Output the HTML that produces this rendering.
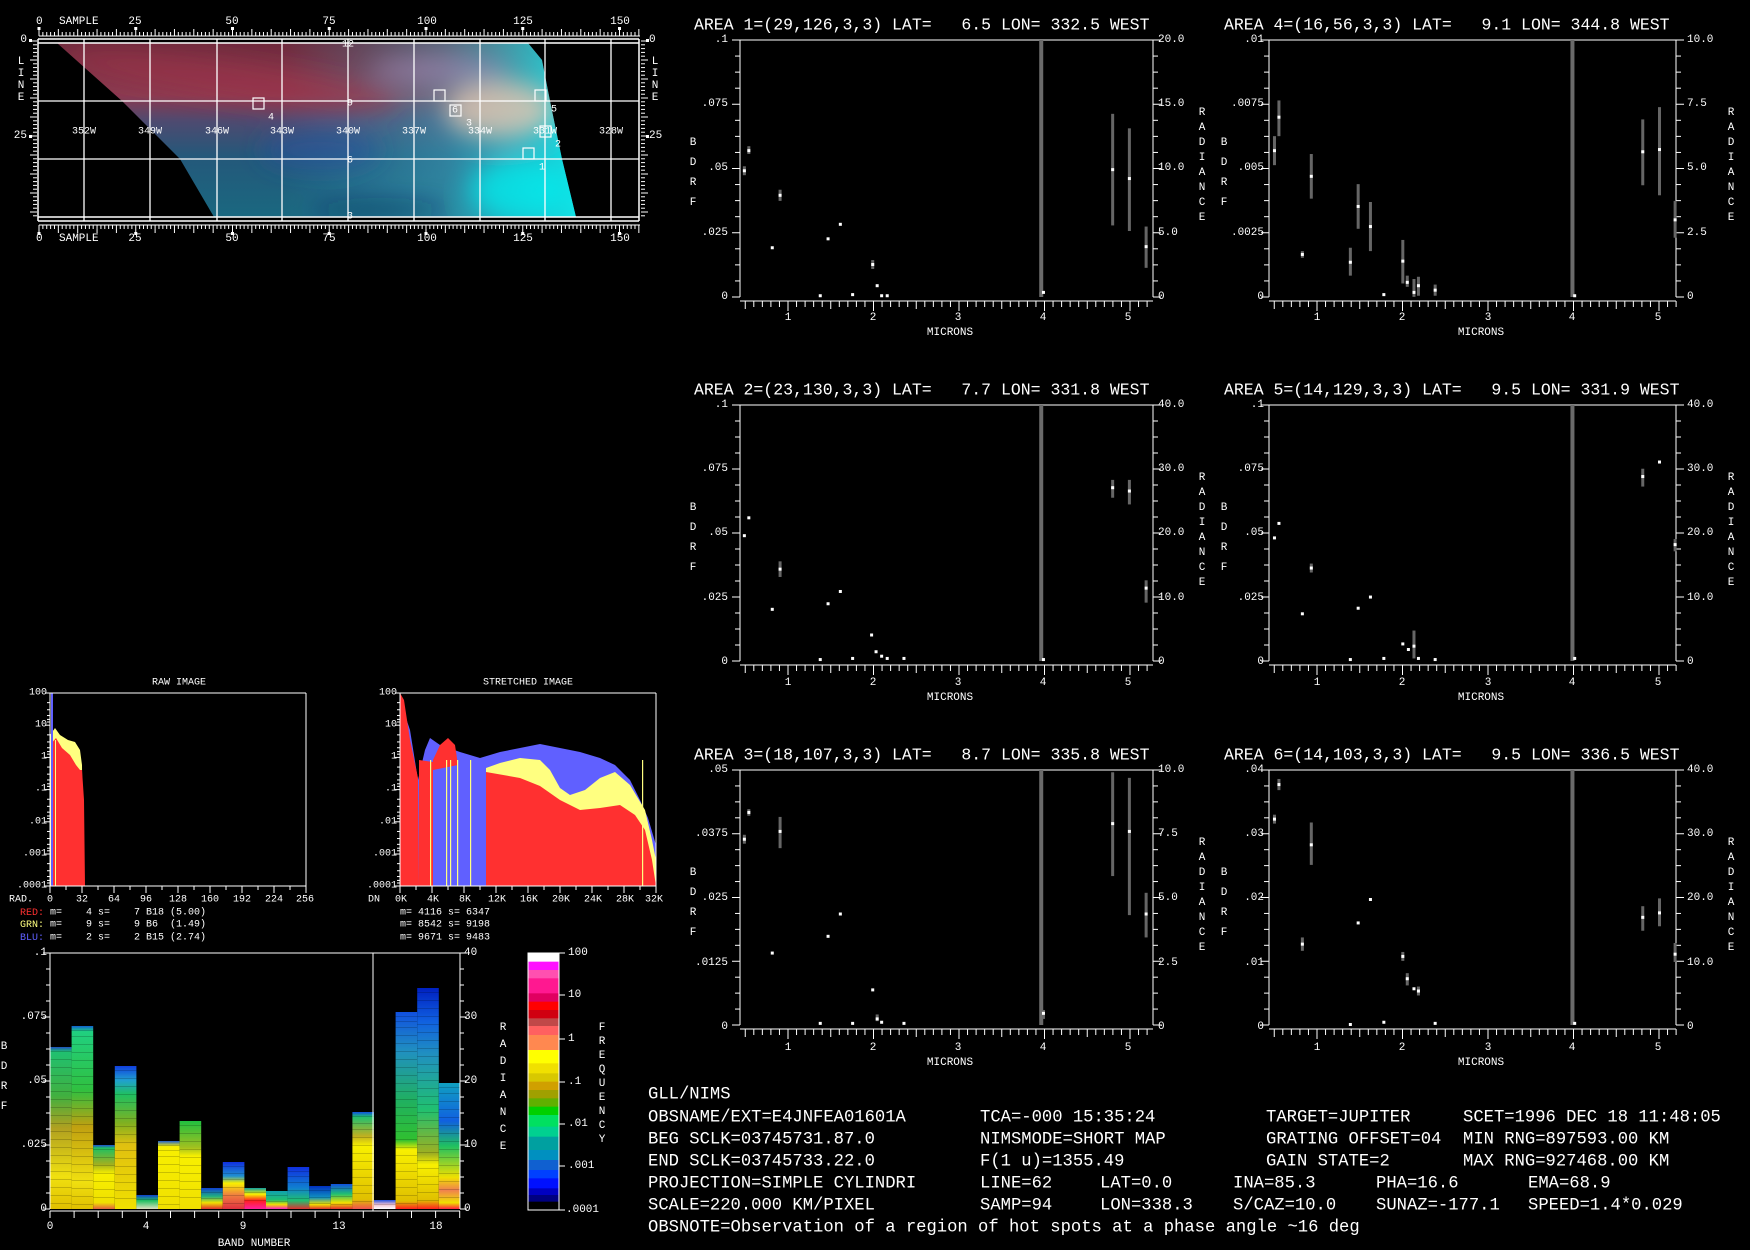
<!DOCTYPE html>
<html><head><meta charset="utf-8"><style>
html,body{margin:0;padding:0;background:#000;width:1750px;height:1250px;overflow:hidden}
svg{display:block}
text{font-family:"Liberation Mono",monospace;fill:#fff;dominant-baseline:central;white-space:pre}
.s{font-size:11px}.t{font-size:16.5px}.b{font-size:17.2px}.h{font-size:10px}
.e{text-anchor:end}.m{text-anchor:middle}
</style></head><body>
<svg id="s" width="1750" height="1250" xmlns="http://www.w3.org/2000/svg" xml:space="preserve">
<defs>
<linearGradient id="mv" x1="0" y1="43" x2="0" y2="217" gradientUnits="userSpaceOnUse">
<stop offset="0" stop-color="#6e2a3c"/><stop offset=".3" stop-color="#8a3a50"/><stop offset=".45" stop-color="#4e4a70"/><stop offset=".65" stop-color="#24587a"/><stop offset="1" stop-color="#1a6880"/></linearGradient>
<linearGradient id="mh" x1="280" y1="0" x2="576" y2="0" gradientUnits="userSpaceOnUse">
<stop offset="0" stop-color="#30a0c0" stop-opacity="0"/><stop offset=".55" stop-color="#40b0c8" stop-opacity=".45"/><stop offset="1" stop-color="#10f0f0" stop-opacity=".9"/></linearGradient>
<clipPath id="mc"><polygon points="57,43 528,43 542,60 550,101 562,159 576,217 214,217 180,159 122,101"/></clipPath>
<filter id="bl"><feGaussianBlur stdDeviation="12"/></filter>
</defs>
<g clip-path="url(#mc)">
<rect x="40" y="40" width="600" height="180" fill="url(#mv)"/>
<rect x="40" y="40" width="600" height="180" fill="url(#mh)"/>
<g filter="url(#bl)">
<ellipse cx="230" cy="80" rx="170" ry="18" fill="#a03048" opacity=".6" transform="rotate(8 230 80)"/>
<ellipse cx="500" cy="110" rx="55" ry="28" fill="#f0c8b0" opacity=".75"/>
<ellipse cx="440" cy="70" rx="70" ry="14" fill="#b090c0" opacity=".5"/>
<ellipse cx="320" cy="150" rx="60" ry="20" fill="#2a50a0" opacity=".5"/>
<ellipse cx="520" cy="190" rx="50" ry="30" fill="#00f0f0" opacity=".7"/>
<ellipse cx="380" cy="210" rx="70" ry="6" fill="#102050" opacity=".7"/>
</g>
</g>
<g id="g"></g>

<text class="s" x="36" y="22">0</text><text class="s" x="59" y="22">SAMPLE</text>
<text class="s m" x="135" y="22">25</text><text class="s m" x="232" y="22">50</text><text class="s m" x="329" y="22">75</text><text class="s m" x="427" y="22">100</text><text class="s m" x="523" y="22">125</text><text class="s m" x="620" y="22">150</text>
<text class="s" x="36" y="239">0</text><text class="s" x="59" y="239">SAMPLE</text>
<text class="s m" x="135" y="239">25</text><text class="s m" x="232" y="239">50</text><text class="s m" x="329" y="239">75</text><text class="s m" x="427" y="239">100</text><text class="s m" x="523" y="239">125</text><text class="s m" x="620" y="239">150</text>
<text class="s e" x="27" y="40">0</text><text class="s e" x="27" y="136">25</text>
<text class="s m" x="21" y="62">L</text><text class="s m" x="21" y="74">I</text><text class="s m" x="21" y="86">N</text><text class="s m" x="21" y="98">E</text>
<text class="s" x="649" y="40">0</text><text class="s" x="649" y="136">25</text>
<text class="s m" x="655" y="62">L</text><text class="s m" x="655" y="74">I</text><text class="s m" x="655" y="86">N</text><text class="s m" x="655" y="98">E</text>
<text class="h m" x="84" y="132">352W</text><text class="h m" x="150" y="132">349W</text><text class="h m" x="217" y="132">346W</text><text class="h m" x="282" y="132">343W</text><text class="h m" x="348" y="132">340W</text><text class="h m" x="414" y="132">337W</text><text class="h m" x="480" y="132">334W</text><text class="h m" x="545" y="132">331W</text><text class="h m" x="611" y="132">328W</text>
<text class="h m" x="348" y="45">12</text><text class="h m" x="350" y="104">9</text><text class="h m" x="350" y="161">6</text><text class="h m" x="350" y="217">3</text>
<text class="h" x="268" y="118">4</text><text class="h" x="452" y="111">6</text><text class="h" x="466" y="124">3</text><text class="h" x="551" y="110">5</text><text class="h" x="555" y="145">2</text><text class="h" x="539" y="168">1</text>

<text class="t" x="694" y="25">AREA 1=(29,126,3,3) LAT=   6.5 LON= 332.5 WEST</text>
<text class="t" x="1224" y="25">AREA 4=(16,56,3,3) LAT=   9.1 LON= 344.8 WEST</text>
<text class="t" x="694" y="390">AREA 2=(23,130,3,3) LAT=   7.7 LON= 331.8 WEST</text>
<text class="t" x="1224" y="390">AREA 5=(14,129,3,3) LAT=   9.5 LON= 331.9 WEST</text>
<text class="t" x="694" y="755">AREA 3=(18,107,3,3) LAT=   8.7 LON= 335.8 WEST</text>
<text class="t" x="1224" y="755">AREA 6=(14,103,3,3) LAT=   9.5 LON= 336.5 WEST</text>

<g>
<text class="s e" x="728" y="40">.1</text><text class="s e" x="728" y="104">.075</text><text class="s e" x="728" y="168">.05</text><text class="s e" x="728" y="233">.025</text><text class="s e" x="728" y="297">0</text>
<text class="s" x="1158" y="40">20.0</text><text class="s" x="1158" y="104">15.0</text><text class="s" x="1158" y="168">10.0</text><text class="s" x="1158" y="233">5.0</text><text class="s" x="1158" y="297">0</text>
<text class="s e" x="1264" y="40">.01</text><text class="s e" x="1264" y="104">.0075</text><text class="s e" x="1264" y="168">.005</text><text class="s e" x="1264" y="233">.0025</text><text class="s e" x="1264" y="297">0</text>
<text class="s" x="1687" y="40">10.0</text><text class="s" x="1687" y="104">7.5</text><text class="s" x="1687" y="168">5.0</text><text class="s" x="1687" y="233">2.5</text><text class="s" x="1687" y="297">0</text>
</g>
<g transform="translate(0,365)">
<text class="s e" x="728" y="40">.1</text><text class="s e" x="728" y="104">.075</text><text class="s e" x="728" y="168">.05</text><text class="s e" x="728" y="233">.025</text><text class="s e" x="728" y="297">0</text>
<text class="s" x="1158" y="40">40.0</text><text class="s" x="1158" y="104">30.0</text><text class="s" x="1158" y="168">20.0</text><text class="s" x="1158" y="233">10.0</text><text class="s" x="1158" y="297">0</text>
<text class="s e" x="1264" y="40">.1</text><text class="s e" x="1264" y="104">.075</text><text class="s e" x="1264" y="168">.05</text><text class="s e" x="1264" y="233">.025</text><text class="s e" x="1264" y="297">0</text>
<text class="s" x="1687" y="40">40.0</text><text class="s" x="1687" y="104">30.0</text><text class="s" x="1687" y="168">20.0</text><text class="s" x="1687" y="233">10.0</text><text class="s" x="1687" y="297">0</text>
</g>
<g transform="translate(0,730)">
<text class="s e" x="728" y="40">.05</text><text class="s e" x="728" y="104">.0375</text><text class="s e" x="728" y="168">.025</text><text class="s e" x="728" y="233">.0125</text><text class="s e" x="728" y="297">0</text>
<text class="s" x="1158" y="40">10.0</text><text class="s" x="1158" y="104">7.5</text><text class="s" x="1158" y="168">5.0</text><text class="s" x="1158" y="233">2.5</text><text class="s" x="1158" y="297">0</text>
<text class="s e" x="1264" y="40">.04</text><text class="s e" x="1264" y="104">.03</text><text class="s e" x="1264" y="168">.02</text><text class="s e" x="1264" y="233">.01</text><text class="s e" x="1264" y="297">0</text>
<text class="s" x="1687" y="40">40.0</text><text class="s" x="1687" y="104">30.0</text><text class="s" x="1687" y="168">20.0</text><text class="s" x="1687" y="233">10.0</text><text class="s" x="1687" y="297">0</text>
</g>
<g>
<text class="s m" x="788" y="318">1</text><text class="s m" x="873" y="318">2</text><text class="s m" x="958" y="318">3</text><text class="s m" x="1043" y="318">4</text><text class="s m" x="1128" y="318">5</text>
<text class="s m" x="950" y="333">MICRONS</text>
<text class="s m" x="1317" y="318">1</text><text class="s m" x="1402" y="318">2</text><text class="s m" x="1488" y="318">3</text><text class="s m" x="1572" y="318">4</text><text class="s m" x="1658" y="318">5</text>
<text class="s m" x="1481" y="333">MICRONS</text>
<text class="s m" x="693" y="143">B</text><text class="s m" x="693" y="163">D</text><text class="s m" x="693" y="183">R</text><text class="s m" x="693" y="203">F</text>
<text class="s m" x="1224" y="143">B</text><text class="s m" x="1224" y="163">D</text><text class="s m" x="1224" y="183">R</text><text class="s m" x="1224" y="203">F</text>
<text class="s m" x="1202" y="113">R</text><text class="s m" x="1202" y="128">A</text><text class="s m" x="1202" y="143">D</text><text class="s m" x="1202" y="158">I</text><text class="s m" x="1202" y="173">A</text><text class="s m" x="1202" y="188">N</text><text class="s m" x="1202" y="203">C</text><text class="s m" x="1202" y="218">E</text>
<text class="s m" x="1731" y="113">R</text><text class="s m" x="1731" y="128">A</text><text class="s m" x="1731" y="143">D</text><text class="s m" x="1731" y="158">I</text><text class="s m" x="1731" y="173">A</text><text class="s m" x="1731" y="188">N</text><text class="s m" x="1731" y="203">C</text><text class="s m" x="1731" y="218">E</text>
</g>
<g transform="translate(0,365)">
<text class="s m" x="788" y="318">1</text><text class="s m" x="873" y="318">2</text><text class="s m" x="958" y="318">3</text><text class="s m" x="1043" y="318">4</text><text class="s m" x="1128" y="318">5</text>
<text class="s m" x="950" y="333">MICRONS</text>
<text class="s m" x="1317" y="318">1</text><text class="s m" x="1402" y="318">2</text><text class="s m" x="1488" y="318">3</text><text class="s m" x="1572" y="318">4</text><text class="s m" x="1658" y="318">5</text>
<text class="s m" x="1481" y="333">MICRONS</text>
<text class="s m" x="693" y="143">B</text><text class="s m" x="693" y="163">D</text><text class="s m" x="693" y="183">R</text><text class="s m" x="693" y="203">F</text>
<text class="s m" x="1224" y="143">B</text><text class="s m" x="1224" y="163">D</text><text class="s m" x="1224" y="183">R</text><text class="s m" x="1224" y="203">F</text>
<text class="s m" x="1202" y="113">R</text><text class="s m" x="1202" y="128">A</text><text class="s m" x="1202" y="143">D</text><text class="s m" x="1202" y="158">I</text><text class="s m" x="1202" y="173">A</text><text class="s m" x="1202" y="188">N</text><text class="s m" x="1202" y="203">C</text><text class="s m" x="1202" y="218">E</text>
<text class="s m" x="1731" y="113">R</text><text class="s m" x="1731" y="128">A</text><text class="s m" x="1731" y="143">D</text><text class="s m" x="1731" y="158">I</text><text class="s m" x="1731" y="173">A</text><text class="s m" x="1731" y="188">N</text><text class="s m" x="1731" y="203">C</text><text class="s m" x="1731" y="218">E</text>
</g>
<g transform="translate(0,730)">
<text class="s m" x="788" y="318">1</text><text class="s m" x="873" y="318">2</text><text class="s m" x="958" y="318">3</text><text class="s m" x="1043" y="318">4</text><text class="s m" x="1128" y="318">5</text>
<text class="s m" x="950" y="333">MICRONS</text>
<text class="s m" x="1317" y="318">1</text><text class="s m" x="1402" y="318">2</text><text class="s m" x="1488" y="318">3</text><text class="s m" x="1572" y="318">4</text><text class="s m" x="1658" y="318">5</text>
<text class="s m" x="1481" y="333">MICRONS</text>
<text class="s m" x="693" y="143">B</text><text class="s m" x="693" y="163">D</text><text class="s m" x="693" y="183">R</text><text class="s m" x="693" y="203">F</text>
<text class="s m" x="1224" y="143">B</text><text class="s m" x="1224" y="163">D</text><text class="s m" x="1224" y="183">R</text><text class="s m" x="1224" y="203">F</text>
<text class="s m" x="1202" y="113">R</text><text class="s m" x="1202" y="128">A</text><text class="s m" x="1202" y="143">D</text><text class="s m" x="1202" y="158">I</text><text class="s m" x="1202" y="173">A</text><text class="s m" x="1202" y="188">N</text><text class="s m" x="1202" y="203">C</text><text class="s m" x="1202" y="218">E</text>
<text class="s m" x="1731" y="113">R</text><text class="s m" x="1731" y="128">A</text><text class="s m" x="1731" y="143">D</text><text class="s m" x="1731" y="158">I</text><text class="s m" x="1731" y="173">A</text><text class="s m" x="1731" y="188">N</text><text class="s m" x="1731" y="203">C</text><text class="s m" x="1731" y="218">E</text>
</g>

<text class="h m" x="179" y="683">RAW IMAGE</text>
<text class="h m" x="528" y="683">STRETCHED IMAGE</text>
<text class="h e" x="47" y="693">100</text><text class="h e" x="47" y="725">10</text><text class="h e" x="47" y="757">1</text><text class="h e" x="47" y="789">.1</text><text class="h e" x="47" y="822">.01</text><text class="h e" x="47" y="854">.001</text><text class="h e" x="47" y="886">.0001</text>
<text class="h e" x="397" y="693">100</text><text class="h e" x="397" y="725">10</text><text class="h e" x="397" y="757">1</text><text class="h e" x="397" y="789">.1</text><text class="h e" x="397" y="822">.01</text><text class="h e" x="397" y="854">.001</text><text class="h e" x="397" y="886">.0001</text>
<text class="h" x="9" y="900">RAD.</text>
<text class="h m" x="50" y="900">0</text><text class="h m" x="82" y="900">32</text><text class="h m" x="114" y="900">64</text><text class="h m" x="146" y="900">96</text><text class="h m" x="178" y="900">128</text><text class="h m" x="210" y="900">160</text><text class="h m" x="242" y="900">192</text><text class="h m" x="274" y="900">224</text><text class="h m" x="305" y="900">256</text>
<text class="h" x="368" y="900">DN</text>
<text class="h m" x="401" y="900">0K</text><text class="h m" x="433" y="900">4K</text><text class="h m" x="465" y="900">8K</text><text class="h m" x="497" y="900">12K</text><text class="h m" x="529" y="900">16K</text><text class="h m" x="561" y="900">20K</text><text class="h m" x="593" y="900">24K</text><text class="h m" x="625" y="900">28K</text><text class="h m" x="654" y="900">32K</text>
<text class="h" x="20" y="913"><tspan style="fill:#ff3030">RED:</tspan> m=    4 s=    7 B18 (5.00)</text>
<text class="h" x="20" y="925"><tspan style="fill:#ffff80">GRN:</tspan> m=    9 s=    9 B6  (1.49)</text>
<text class="h" x="20" y="938"><tspan style="fill:#6060ff">BLU:</tspan> m=    2 s=    2 B15 (2.74)</text>
<text class="h" x="400" y="913">m= 4116 s= 6347</text>
<text class="h" x="400" y="925">m= 8542 s= 9198</text>
<text class="h" x="400" y="938">m= 9671 s= 9483</text>

<text class="s e" x="47" y="953">.1</text><text class="s e" x="47" y="1017">.075</text><text class="s e" x="47" y="1081">.05</text><text class="s e" x="47" y="1145">.025</text><text class="s e" x="47" y="1209">0</text>
<text class="s" x="464" y="953">40</text><text class="s" x="464" y="1017">30</text><text class="s" x="464" y="1081">20</text><text class="s" x="464" y="1145">10</text><text class="s" x="464" y="1209">0</text>
<text class="s m" x="4" y="1047">B</text><text class="s m" x="4" y="1067">D</text><text class="s m" x="4" y="1087">R</text><text class="s m" x="4" y="1107">F</text>
<text class="s m" x="503" y="1028">R</text><text class="s m" x="503" y="1045">A</text><text class="s m" x="503" y="1062">D</text><text class="s m" x="503" y="1079">I</text><text class="s m" x="503" y="1096">A</text><text class="s m" x="503" y="1113">N</text><text class="s m" x="503" y="1130">C</text><text class="s m" x="503" y="1147">E</text>
<text class="s m" x="50" y="1227">0</text><text class="s m" x="146" y="1227">4</text><text class="s m" x="243" y="1227">9</text><text class="s m" x="339" y="1227">13</text><text class="s m" x="436" y="1227">18</text>
<text class="s m" x="254" y="1244">BAND NUMBER</text>
<text class="s" x="568" y="953">100</text><text class="s" x="568" y="995">10</text><text class="s" x="568" y="1039">1</text><text class="s" x="568" y="1082">.1</text><text class="s" x="568" y="1124">.01</text><text class="s" x="568" y="1166">.001</text><text class="s" x="566" y="1210">.0001</text>
<text class="s m" x="602" y="1028">F</text><text class="s m" x="602" y="1042">R</text><text class="s m" x="602" y="1056">E</text><text class="s m" x="602" y="1070">Q</text><text class="s m" x="602" y="1084">U</text><text class="s m" x="602" y="1098">E</text><text class="s m" x="602" y="1112">N</text><text class="s m" x="602" y="1126">C</text><text class="s m" x="602" y="1140">Y</text>

<text class="b" x="648" y="1095">GLL/NIMS</text>
<text class="b" x="648" y="1118">OBSNAME/EXT=E4JNFEA01601A</text><text class="b" x="980" y="1118">TCA=-000 15:35:24</text><text class="b" x="1266" y="1118">TARGET=JUPITER</text><text class="b" x="1463" y="1118">SCET=1996 DEC 18 11:48:05</text>
<text class="b" x="648" y="1140">BEG SCLK=03745731.87.0</text><text class="b" x="980" y="1140">NIMSMODE=SHORT MAP</text><text class="b" x="1266" y="1140">GRATING OFFSET=04</text><text class="b" x="1463" y="1140">MIN RNG=897593.00 KM</text>
<text class="b" x="648" y="1162">END SCLK=03745733.22.0</text><text class="b" x="980" y="1162">F(1 u)=1355.49</text><text class="b" x="1266" y="1162">GAIN STATE=2</text><text class="b" x="1463" y="1162">MAX RNG=927468.00 KM</text>
<text class="b" x="648" y="1184">PROJECTION=SIMPLE CYLINDRI</text><text class="b" x="980" y="1184">LINE=62</text><text class="b" x="1100" y="1184">LAT=0.0</text><text class="b" x="1233" y="1184">INA=85.3</text><text class="b" x="1376" y="1184">PHA=16.6</text><text class="b" x="1528" y="1184">EMA=68.9</text>
<text class="b" x="648" y="1206">SCALE=220.000 KM/PIXEL</text><text class="b" x="980" y="1206">SAMP=94</text><text class="b" x="1100" y="1206">LON=338.3</text><text class="b" x="1233" y="1206">S/CAZ=10.0</text><text class="b" x="1376" y="1206">SUNAZ=-177.1</text><text class="b" x="1528" y="1206">SPEED=1.4*0.029</text>
<text class="b" x="648" y="1228">OBSNOTE=Observation of a region of hot spots at a phase angle ~16 deg</text>
</svg>
<script>
var NS='http://www.w3.org/2000/svg',G=document.getElementById('g');
function el(t,a){var e=document.createElementNS(NS,t);for(var k in a)e.setAttribute(k,a[k]);G.appendChild(e);return e;}
function L(x1,y1,x2,y2,c,w){el('line',{x1:x1,y1:y1,x2:x2,y2:y2,stroke:c||'#fff','stroke-width':w||1});}
function R(x,y,w,h,c){el('rect',{x:x,y:y,width:w,height:h,fill:c});}
function P(pts,c){el('polygon',{points:pts,fill:c});}
L(38,39,639,39,'#fff',1.5);L(38,43,639,43,'#fff',1.5);L(38,217,639,217,'#fff',1.5);L(38,221,639,221,'#fff',1.5);
L(38,39,38,221,'#fff',1.5);L(639,39,639,221,'#fff',1.5);
[84,150,217,282,348,414,480,545,611].forEach(function(x){L(x,39,x,221,'#fff',1.3);});
L(38,101,639,101,'#fff',1.3);L(38,159,639,159,'#fff',1.3);
for(var s=0;s<=155;s++){var x=39+s*3.87;if(x>640)break;var lg=s%5==0;L(x,lg?29:32,x,36);L(x,225,x,lg?233:229);}
L(39,36,640,36);L(39,225,640,225);
[0,25,50,75,100,125,150].forEach(function(s){var x=39+s*3.87;R(x-1.5,27,3,3,'#fff');R(x-1.5,232,3,3,'#fff');});
for(var l=0;l<=46;l++){var y=41+l*3.8;if(y>220)break;var lg=l%5==0;L(lg?30:33,y,37,y);L(641,y,lg?648:645,y);}
R(29,39,3,3,'#fff');R(29,135,3,3,'#fff');R(646,39,3,3,'#fff');R(646,135,3,3,'#fff');
[[253,98],[434,90],[450,105],[535,90],[540,126],[523,148]].forEach(function(b){el('rect',{x:b[0],y:b[1],width:11,height:11,fill:'none',stroke:'#fff','stroke-width':1.2});});
var S=1.116;
function plot(bx1,bx2,by1,by2,m1,pts,bigx){
 L(bx1,by1,bx2,by1);L(bx1,by1,bx1,by2);L(bx2,by1,bx2,by2);
 for(var i=0;i<=16;i++){var y=by1+i*(by2-by1)/16,lg=i%4==0;L(bx1-(lg?8:5),y,bx1,y);L(bx2,y,bx2+(lg?8:5),y);}
 var ya=by2+4;L(bx1,ya,bx2,ya);
 for(var m=0.5;m<=5.21;m+=0.1){var x=m1+(m-1)*85.5;if(x<bx1-1||x>bx2+1)continue;var r=Math.round(m*10);L(x,ya,x,ya+(r%10==0?10:(r%5==0?8:6)));}
 var bx=bigx*S;R(bx-2,by1,4,by2-by1,'#6a6a6a');
 pts.forEach(function(p){var x=p[0]*S,y=p[1]*S;if(p.length>2)R(x-1.5,p[2]*S,3,(p[3]-p[2])*S,'#666');R(x-1.5,y-1.5,3,3,'#fff');});
}
plot(740,1153,40,297,788,[[667,153,149,157],[671,135,131,138],[692,222],[699,175,170,180],[735,265],[742,214],[753,201],[764,264],[782,237,233,241],[786,256],[790,265],[795,265],[935,262],[997,152,102,202],[1012,160,115,207],[1027,221,203,240]],933);
plot(740,1153,405,661,788,[[667,480],[671,464],[692,546],[699,510,503,517],[735,591],[742,541],[753,530],[764,590],[781,569],[785,584],[790,588],[795,590],[810,590],[935,591],[997,437,430,446],[1012,440,430,452],[1027,527,520,540]],933);
plot(740,1153,770,1025,788,[[667,752,748,756],[671,728,725,731],[692,854],[699,745,732,760],[735,917],[742,839],[753,819],[764,917],[782,887],[786,913,909,915],[790,916],[810,917],[935,908,905,913],[997,738,692,785],[1012,745,697,820],[1027,819,800,840]],933);
plot(1269,1676,40,297,1317,[[1142,135,122,148],[1146,105,90,122],[1167,228,225,231],[1175,158,138,178],[1210,235,222,247],[1217,185,165,205],[1228,203,181,225],[1240,264],[1257,234,215,254],[1261,253,247,257],[1267,262,250,266],[1271,256,248,265],[1286,260,255,265],[1411,265],[1472,136,107,166],[1487,134,96,175],[1501,197,180,213]],1409);
plot(1269,1676,405,661,1317,[[1142,482],[1146,469],[1167,550],[1175,509,505,513],[1210,591],[1217,545],[1228,535],[1240,590],[1257,577],[1262,582],[1267,579,565,590],[1271,590],[1286,591],[1411,590],[1472,427,420,436],[1487,414],[1501,488,483,494]],1409);
plot(1269,1676,770,1025,1317,[[1142,734,730,738],[1146,703,698,708],[1167,846,840,852],[1175,757,737,775],[1210,918],[1217,827],[1228,806],[1240,916],[1257,857,853,861],[1261,877,872,883],[1267,886],[1271,888,884,892],[1286,917],[1411,917],[1472,822,812,834],[1487,818,805,830],[1501,855,845,862]],1409);
function hbox(x1,x2){L(x1,693,x2,693);L(x1,693,x1,886);L(x2,693,x2,886);L(x1,886,x2,886);
 for(var d=0;d<6;d++){var y0=693+d*32.2;L(x1-5,y0,x1,y0);[0.3,0.52,0.7,0.82,0.9].forEach(function(f){var y=y0+f*32.2;L(x1-3,y,x1,y);});}L(x1-5,886,x1,886);
 for(var k=0;k<=16;k++){var x=x1+k*(x2-x1)/16;L(x,886,x,k%2==0?893:890);}}
P('50,886 50,735 55,728 60,735 68,740 75,742 80,750 82,765 83,886','#ffff80');
P('50,886 50,745 56,738 62,748 70,755 76,765 80,770 82,770 84,800 85,886','#ff3030');
R(51,693,2,193,'#6060ff');R(50,886-150,1,150,'#ffff80');R(55,740,1,146,'#ffff80');
hbox(50,306);
P('400,886 400,700 410,730 418,780 425,750 430,738 440,745 460,752 480,758 500,752 520,748 540,744 560,748 580,752 600,758 615,765 630,780 640,800 648,818 656,845 656,886','#6060ff');
P('486,886 486,768 500,763 520,758 540,760 550,770 560,788 570,795 585,790 600,778 615,772 630,785 645,810 652,840 656,860 656,886','#ffff80');
P('400,886 400,693 404,700 410,740 418,778 419,886','#ff3030');
P('419,886 419,760 433,762 433,886','#ff3030');
P('433,760 440,745 448,738 455,745 458,765 433,770','#ff3030');
P('486,886 486,772 520,778 540,786 560,800 580,810 600,808 620,805 635,815 645,830 652,860 656,886','#ff3030');
[430,446,450,457,470,642].forEach(function(x){R(x,760,1.2,126,'#ffff80');});
hbox(400,656);
var tops=[1047,1026,1145,1066,1195,1141,1121,1188,1162,1188,1191,1167,1186,1184,1112,1200,1012,988,1083];
var cols=[
[[0,'#2050c0'],[.03,'#20c070'],[.3,'#40b040'],[.5,'#b0a020'],[.8,'#f0e010'],[1,'#e0c000']],
[[0,'#1060d0'],[.03,'#20d080'],[.35,'#30c040'],[.55,'#c0a010'],[.85,'#f0e010'],[1,'#e0c000']],
[[0,'#2050d0'],[.05,'#20c060'],[.3,'#a0b020'],[.45,'#f8f000'],[.9,'#f0e000'],[1,'#e06040']],
[[0,'#1040e0'],[.1,'#20a0d0'],[.2,'#20c060'],[.4,'#80b020'],[.55,'#e0c010'],[1,'#f0e000']],
[[0,'#1040d0'],[.4,'#20c060'],[1,'#e0e0c0']],
[[0,'#2060d0'],[.08,'#f8f000'],[1,'#f0e000']],
[[0,'#20c040'],[.3,'#a0c020'],[.4,'#f8f000'],[1,'#f0e000']],
[[0,'#1040d0'],[.4,'#20b080'],[.7,'#f0e000'],[1,'#e03030']],
[[0,'#1030e0'],[.3,'#2090d0'],[.45,'#f8f000'],[.7,'#f08040'],[1,'#e03040']],
[[0,'#10a0a0'],[.3,'#f8f000'],[.6,'#ff2020'],[1,'#ff20a0']],
[[0,'#10a0b0'],[.5,'#20c070'],[.75,'#f0e000'],[1,'#ff20c0']],
[[0,'#1030e0'],[.5,'#1080d0'],[.8,'#20c070'],[1,'#e03030']],
[[0,'#0030c0'],[.5,'#1090c0'],[.8,'#f0e000'],[1,'#e03030']],
[[0,'#1050e0'],[.4,'#20c070'],[.75,'#f0e000'],[1,'#e03030']],
[[0,'#1050e0'],[.05,'#20c070'],[.25,'#c0b020'],[.35,'#f8f000'],[.9,'#e0c000'],[1,'#f05050']],
[[0,'#2050e0'],[.5,'#f0c0d0'],[1,'#ffffff']],
[[0,'#1050e0'],[.2,'#2090c0'],[.45,'#20b060'],[.65,'#30c030'],[.7,'#f8f000'],[.96,'#e0c000'],[1,'#ff2020']],
[[0,'#0020c0'],[.15,'#1060e0'],[.3,'#2090c0'],[.55,'#20c070'],[.75,'#a0b020'],[.8,'#f8f000'],[.96,'#e0c000'],[1,'#ff2020']],
[[0,'#10a0c0'],[.3,'#1060e0'],[.5,'#20c060'],[.75,'#f0e000'],[.85,'#f08050'],[.95,'#f0e000'],[1,'#ff2040']]];
var defs=document.querySelector('defs');
tops.forEach(function(t,i){var lg=document.createElementNS(NS,'linearGradient');lg.setAttribute('id','bg'+i);lg.setAttribute('x1',0);lg.setAttribute('y1',0);lg.setAttribute('x2',0);lg.setAttribute('y2',1);
 cols[i].forEach(function(c){var s=document.createElementNS(NS,'stop');s.setAttribute('offset',c[0]);s.setAttribute('stop-color',c[1]);lg.appendChild(s);});defs.appendChild(lg);
 var x=50+i*21.6;R(x,t,21.6,1209-t,'url(#bg'+i+')');
 for(var y=t+4;y<1205;y+=5+((i*7+y)%4)){R(x,y,21.6,1,'rgba(0,0,0,0.18)');}
});
L(50,953,460,953);L(50,953,50,1209);L(460,953,460,1209);L(373,953,373,1211);
for(var i=0;i<=16;i++){var y=953+i*16;L(i%4==0?43:46,y,50,y);L(460,y,i%4==0?467:464,y);}
L(50,1211,460,1211);for(var k=0;k<=17;k++){var x=50+k*24.1;L(x,1211,x,1218);}
var cb=[[40,'#ffffff'],[65,'#ff10ff'],[90,'#ff50b0'],[115,'#ff1890'],[160,'#e00060'],[185,'#ff0000'],[210,'#d00010'],[235,'#c04848'],[258,'#ff6060'],[285,'#ff8850'],[330,'#ffff00'],[370,'#f0e000'],[400,'#d8c800'],[425,'#d0a000'],[450,'#a0a000'],[475,'#60b000'],[500,'#00d000'],[525,'#00e060'],[560,'#00d090'],[590,'#00a0a0'],[630,'#0090c0'],[660,'#1060d0'],[690,'#0040ff'],[715,'#0010ff'],[745,'#0000c0'],[765,'#000080'],[785,'#000000'],[810,null]];
for(var i=0;i<cb.length-1;i++){var y1=940+cb[i][0]/3,y2=940+cb[i+1][0]/3;R(528,y1,31,y2-y1+0.5,cb[i][1]);}
el('rect',{x:528,y:953,width:31,height:257,fill:'none',stroke:'#fff','stroke-width':1});
[953,995,1039,1082,1124,1166,1210].forEach(function(y){L(559,y,565,y);});
</script>
</body></html>
